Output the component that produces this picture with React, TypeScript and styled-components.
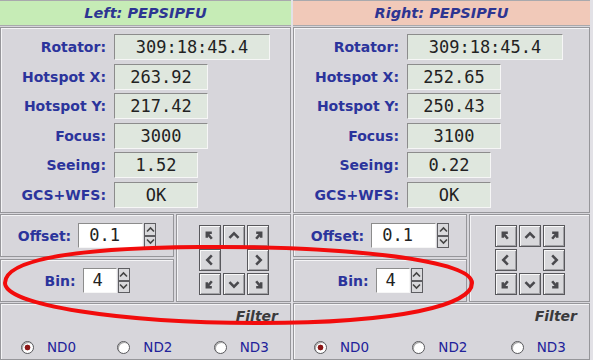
import React from 'react';
import styled, { createGlobalStyle } from 'styled-components';

type Side = {
  title: string;
  tone: string;
  rows: { label: string; value: string; width: number }[];
  offset: string;
  bin: string;
};

const sides: Side[] = [
  {
    title: 'Left: PEPSIPFU',
    tone: '#c6ecb6',
    rows: [
      { label: 'Rotator:', value: '309:18:45.4', width: 156 },
      { label: 'Hotspot X:', value: '263.92', width: 94 },
      { label: 'Hotspot Y:', value: '217.42', width: 94 },
      { label: 'Focus:', value: '3000', width: 94 },
      { label: 'Seeing:', value: '1.52', width: 84 },
      { label: 'GCS+WFS:', value: 'OK', width: 84 },
    ],
    offset: '0.1',
    bin: '4',
  },
  {
    title: 'Right: PEPSIPFU',
    tone: '#f1c9b9',
    rows: [
      { label: 'Rotator:', value: '309:18:45.4', width: 156 },
      { label: 'Hotspot X:', value: '252.65', width: 94 },
      { label: 'Hotspot Y:', value: '250.43', width: 94 },
      { label: 'Focus:', value: '3100', width: 94 },
      { label: 'Seeing:', value: '0.22', width: 84 },
      { label: 'GCS+WFS:', value: 'OK', width: 84 },
    ],
    offset: '0.1',
    bin: '4',
  },
];

const filters = ['ND0', 'ND2', 'ND3'];

// arrow pad: direction per cell, null = empty centre
const pad: (string | null)[] = ['nw', 'n', 'ne', 'w', null, 'e', 'sw', 's', 'se'];

const arrowPaths: Record<string, string> = {
  n: 'M6 13 L11 8 L16 13',
  s: 'M6 9 L11 14 L16 9',
  w: 'M13 6 L8 11 L13 16',
  e: 'M9 6 L14 11 L9 16',
  nw: 'M7.5 13 L7.5 7.5 L13 7.5 M7.5 7.5 L13 14',
  ne: 'M9 7.5 L14.5 7.5 L14.5 13 M14.5 7.5 L9 14',
  sw: 'M7.5 9 L7.5 14.5 L13 14.5 M7.5 14.5 L13 8',
  se: 'M14.5 9 L14.5 14.5 L9 14.5 M14.5 14.5 L9 8',
};

const GlobalStyle = createGlobalStyle`
  html, body {
    margin: 0;
    padding: 0;
    background: #e2e1e6;
  }
  body {
    font-family: "DejaVu Sans", "Noto Sans", sans-serif;
  }
`;

const Screen = styled.div`
  position: relative;
  width: 593px;
  height: 360px;
  overflow: hidden;
  display: grid;
  grid-template-columns: 291px 297px;
  column-gap: 2px;
  align-items: start;
  background: #e2e1e6;
`;

const Panel = styled.section`
  display: flex;
  flex-direction: column;
  gap: 1px;
  height: 360px;
  background: #d7d6db;
`;

const Header = styled.header<{ $tone: string }>`
  height: 24px;
  border-top: 1px solid #a9a9ad;
  border-bottom: 1px solid #a9a9ad;
  background: ${p => p.$tone};
  display: flex;
  align-items: center;
  justify-content: center;
  font-size: 14.5px;
  font-weight: bold;
  font-style: italic;
  color: #2d3592;
`;

const Box = styled.div`
  box-sizing: border-box;
  background: #d7d6db;
  border: 1px solid #96969a;
  box-shadow: inset 1px 1px 0 #f4f4f6;
`;

const InfoBox = styled(Box)`
  height: 186px;
  padding: 6px 0 4px;
  display: grid;
  grid-template-columns: 105px max-content;
  column-gap: 8px;
  row-gap: 3.6px;
  align-content: start;
`;

const Label = styled.span`
  font-size: 14px;
  font-weight: bold;
  color: #2b349c;
  white-space: nowrap;
`;

const RowLabel = styled(Label)`
  text-align: right;
  line-height: 26px;
`;

const Value = styled.div<{ $w: number }>`
  box-sizing: border-box;
  width: ${p => p.$w}px;
  height: 26px;
  border: 1px solid;
  border-color: #8c8c8c #f6f6f6 #f6f6f6 #8c8c8c;
  background: #dfe7de;
  font-family: "DejaVu Sans Mono", "Liberation Mono", monospace;
  font-size: 17px;
  line-height: 24px;
  text-align: center;
  color: #222;
`;

const Controls = styled.div`
  height: 88px;
  display: grid;
  grid-template-columns: 174px 1fr;
  column-gap: 2px;
`;

const ControlStack = styled.div`
  display: grid;
  grid-template-rows: 1fr 1fr;
  row-gap: 2px;
`;

const FieldBox = styled(Box)`
  display: flex;
  align-items: center;
  justify-content: center;
  gap: 7px;
`;

const Entry = styled.div<{ $w: number }>`
  box-sizing: border-box;
  width: ${p => p.$w}px;
  height: 25px;
  padding-left: ${p => (p.$w > 50 ? 10 : 9)}px;
  border: 1px solid;
  border-color: #8c8c8c #f6f6f6 #f6f6f6 #8c8c8c;
  background: #fff;
  font-family: "DejaVu Sans Mono", "Liberation Mono", monospace;
  font-size: 17px;
  line-height: 23px;
  color: #222;
`;

const EntryGroup = styled.div`
  display: flex;
  align-items: center;
  gap: 1px;
`;

const Spinner = styled.div`
  display: flex;
  flex-direction: column;
  width: 12px;
  height: 25px;
`;

const SpinButton = styled.div`
  flex: 1;
  box-sizing: border-box;
  border: 1px solid #5e5e62;
  background: #d9d9dc;
  display: flex;
  align-items: center;
  justify-content: center;
`;

const PadBox = styled(Box)`
  display: flex;
  align-items: center;
  justify-content: center;
  padding-top: 3px;
`;

const Pad = styled.div`
  display: grid;
  grid-template-columns: repeat(3, 22px);
  grid-auto-rows: 22px;
  gap: 2px;
`;

const PadButton = styled.div`
  box-sizing: border-box;
  border: 1px solid #58585c;
  background: #d8d8db;
  box-shadow: inset 1px 1px 0 #f8f8f8, inset -1px -1px 0 #a2a2a6;
  display: flex;
  align-items: center;
  justify-content: center;
`;

const FilterBox = styled(Box)`
  flex: 1;
  display: flex;
  flex-direction: column;
`;

const FilterTitle = styled.div`
  padding: 4px 12px 0 0;
  text-align: right;
  font-size: 14px;
  line-height: 17px;
  font-weight: bold;
  font-style: italic;
  color: #3a3a3c;
`;

const RadioRow = styled.div`
  margin-top: 14px;
  display: grid;
  grid-template-columns: repeat(3, 1fr);
`;

const RadioOption = styled.label`
  display: flex;
  align-items: center;
  gap: 13px;
  padding-left: 20px;
  font-size: 13.5px;
  line-height: 16px;
  color: #22229a;
`;

const RadioDot = styled.span<{ $on: boolean }>`
  box-sizing: border-box;
  width: 13px;
  height: 13px;
  border-radius: 50%;
  border: 1px solid #58585c;
  background: ${p =>
    p.$on
      ? 'radial-gradient(circle, #8c1616 0 2.6px, #fff 3.2px)'
      : '#fff'};
  box-shadow: inset 1px 1px 0 #a8a8a8;
`;

const Annotation = styled.svg`
  position: absolute;
  left: 0;
  top: 0;
  pointer-events: none;
`;

function Chevron({ up }: { up: boolean }) {
  return (
    <svg width="9" height="7" viewBox="0 0 9 7">
      <path
        d={up ? 'M1 5.5 L4.5 2 L8 5.5' : 'M1 1.5 L4.5 5 L8 1.5'}
        fill="none"
        stroke="#444"
        strokeWidth="1.6"
      />
    </svg>
  );
}

function SpinEntry({ value, width }: { value: string; width: number }) {
  return (
    <EntryGroup>
      <Entry $w={width}>{value}</Entry>
      <Spinner>
        <SpinButton>
          <Chevron up />
        </SpinButton>
        <SpinButton>
          <Chevron up={false} />
        </SpinButton>
      </Spinner>
    </EntryGroup>
  );
}

function SidePanel({ side }: { side: Side }) {
  return (
    <Panel>
      <Header $tone={side.tone}>{side.title}</Header>
      <InfoBox>
        {side.rows.map(r => (
          <React.Fragment key={r.label}>
            <RowLabel>{r.label}</RowLabel>
            <Value $w={r.width}>{r.value}</Value>
          </React.Fragment>
        ))}
      </InfoBox>
      <Controls>
        <ControlStack>
          <FieldBox>
            <Label>Offset:</Label>
            <SpinEntry value={side.offset} width={65} />
          </FieldBox>
          <FieldBox>
            <Label>Bin:</Label>
            <SpinEntry value={side.bin} width={34} />
          </FieldBox>
        </ControlStack>
        <PadBox>
          <Pad>
            {pad.map((dir, i) =>
              dir ? (
                <PadButton key={i}>
                  <svg width="22" height="22" viewBox="0 0 22 22">
                    <path
                      d={arrowPaths[dir]}
                      fill="none"
                      stroke="#4a4a4e"
                      strokeWidth="2.8"
                      strokeLinejoin="miter"
                    />
                  </svg>
                </PadButton>
              ) : (
                <span key={i} />
              )
            )}
          </Pad>
        </PadBox>
      </Controls>
      <FilterBox>
        <FilterTitle>Filter</FilterTitle>
        <RadioRow>
          {filters.map((f, i) => (
            <RadioOption key={f}>
              <RadioDot $on={i === 0} />
              {f}
            </RadioOption>
          ))}
        </RadioRow>
      </FilterBox>
    </Panel>
  );
}

export default function App() {
  return (
    <>
      <GlobalStyle />
      <Screen>
        {sides.map(s => (
          <SidePanel key={s.title} side={s} />
        ))}
        <Annotation width="593" height="360" viewBox="0 0 593 360">
          <path
            d="M5 283 C5 262 60 248 200 247 C330 246 472 258 472 283 C472 305 400 323 260 323 C120 323 5 305 5 283 Z"
            fill="none"
            stroke="#f20c0c"
            strokeWidth="4"
          />
        </Annotation>
      </Screen>
    </>
  );
}
